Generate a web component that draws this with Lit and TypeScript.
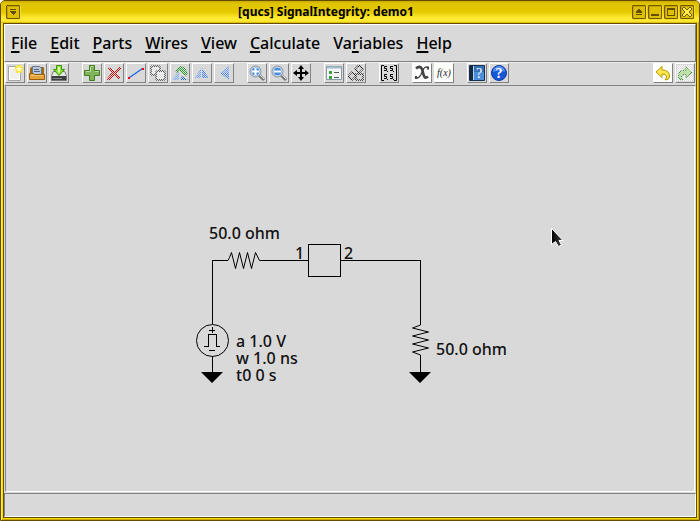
import { LitElement, html, svg, css, nothing, TemplateResult } from "lit";
import { customElement, property } from "lit/decorators.js";

interface Tool {
  name: string;
  icon: TemplateResult;
  stippled?: boolean;
  white?: boolean;
}

const magnifier = (vertical: boolean) => svg`
  <path d="M10 10l5 5" stroke="#777" stroke-width="3"/>
  <path d="M11 10l4 4" stroke="#ddd" stroke-width="1"/>
  <circle cx="6.500" cy="6.500" r="5.500" fill="#a9cdf3" stroke="#8a8f94"/>
  <circle cx="6.500" cy="6.500" r="4.300" fill="#4c8cd8" stroke="#d7e9fb" stroke-width=".8"/>
  <path d="M3 6.500h7" stroke="#fff" stroke-width="2"/>
  ${vertical ? svg`<path d="M6.500 3v7" stroke="#fff" stroke-width="2"/>` : nothing}`;

const newFile: Tool = { name: "New", icon: svg`
  <path d="M1.500 1.500h12v14h-12z" fill="#f0f0ee" stroke="#a2a39d"/>
  <path d="M2.500 2.500h10v12h-10z" fill="none" stroke="#fff"/>
  <circle cx="12" cy="4" r="4" fill="#fff04c"/>
  <path d="M12 0l1.200 2.500 2.800.3-2 1.900.6 2.900L12 6.200 9.400 7.600l.6-2.900-2-1.900 2.800-.3z" fill="#fffde0" stroke="#f2d600" stroke-width=".7"/>` };
const openFile: Tool = { name: "Open", icon: svg`
  <path d="M1 4q0-2 2-2h11q1 0 1 1v11H1z" fill="#a56812"/>
  <path d="M3.500 1.500h7l2 2v6h-9z" fill="#b8c8da" stroke="#66788e"/>
  <path d="M5 4.500h5M5 6.500h6" stroke="#52687f"/>
  <path d="M.5 8.500h4l1 1h10v5H.5z" fill="#e3a43c" stroke="#9a5c08"/>
  <path d="M2 10.500h12" stroke="#f3c468"/>` };
const saveFile: Tool = { name: "Save", icon: svg`
  <path d="M2.500 6.500h11l2 4v5H.5v-5z" fill="#e7e8e6" stroke="#777"/>
  <path d="M1 11h14v4H1z" fill="#3c3f41"/><path d="M2 13.500h9" stroke="#85888a"/>
  <path d="M5.500.5h5v4h3l-5.500 6-5.500-6h3z" fill="#8ae234" stroke="#3f9608"/>
  <path d="M7 2v5l1 1 1-1V2z" fill="#dcf8b6"/>` };
const addPart: Tool = { name: "Add part", icon: svg`
  <path d="M5.500.5h5v5h5v5h-5v5h-5v-5h-5v-5h5z" fill="#80b45a" stroke="#3f7d1d"/>
  <path d="M6.500 2v4.500H2M7 1.500h2.500M11 6.500h4" fill="none" stroke="#bada9f"/>` };
const remove: Tool = { name: "Delete", stippled: true, icon: svg`
  <path d="M2 4l2-1 4 4 5-5 2 1-5 5 4 5-2 1-4-4-4 5-3-1 5-6z" fill="#e01010" stroke="#b80000"/>` };
const wire: Tool = { name: "Add wire", icon: svg`
  <path d="M1.500 12.500l13-9" stroke="#1260e8" stroke-width="1.200"/>
  <path d="M0 12h2v2H0zM14 3h2v2h-2z" fill="#f00"/>` };
const duplicate: Tool = { name: "Duplicate", stippled: true, icon: svg`
  <rect x="1" y="1" width="9" height="9" rx="2" fill="#fff" stroke="#666" stroke-width="2"/>
  <rect x="6" y="6" width="9" height="9" rx="2" fill="#fff" stroke="#666" stroke-width="2"/>` };
const rotate: Tool = { name: "Rotate", stippled: true, icon: svg`
  <path d="M4 7Q7-1 12 3l3 4v3h-3L8 5 5 7z" fill="#2ca52c" stroke="#1c8a1c"/>
  <path d="M0 15L7 6v9z" fill="#79a9ff"/><path d="M8 15l2-4 6 4z" fill="#2368d8"/>` };
const flipHorizontal: Tool = { name: "Flip horizontally", stippled: true, icon: svg`
  <path d="M1 13L7 3v10z" fill="#6ea2fa"/><path d="M8 3l7 10H8z" fill="#4b88ee"/>` };
const flipVertical: Tool = { name: "Flip vertically", stippled: true, icon: svg`
  <path d="M13 1v7H4z" fill="#6ea2fa"/><path d="M4 8h9v7z" fill="#4b88ee"/>` };
const zoomIn: Tool = { name: "Zoom in", icon: magnifier(true) };
const zoomOut: Tool = { name: "Zoom out", icon: magnifier(false) };
const pan: Tool = { name: "Pan", icon: svg`
  <path d="M8 0l3 4H9v3h3V5l4 3-4 3V9H9v3h2l-3 4-3-4h2V9H4v2L0 8l4-3v2h3V4H5z"/>` };
const properties: Tool = { name: "Properties", icon: svg`
  <path d="M.5 1.500h15v13H.5z" fill="#f4f6f6" stroke="#889ba6"/><path d="M1 2.500h14" stroke="#a5bccb" stroke-width="2"/>
  <path d="M3 6h3v3H3zM3 11h3v3H3z" fill="#38a338"/><path d="M8 7.500h5M8 12.500h5" stroke="#555"/>` };
const postProcessing: Tool = { name: "Post-processing", stippled: true, icon: svg`
  <path d="M11 0l4 4-4 4-4-4zM4 7l4 4-4 4-4-4zM8 9h7v6H8z" fill="#d0d0d0" stroke="#222" stroke-width="1.500"/>` };
const sParameters: Tool = { name: "S-parameter viewer", icon: svg`
  <path d="M3 .5H.5v15H3M13 .5h2.500v15H13" fill="none" stroke="#000"/>
  <path d="M6 1.500H3.500v2h2v2H3M12 1.500H9.500v2h2v2H9M6 9.500H3.500v2h2v2H3M12 9.500H9.500v2h2v2H9" fill="none" stroke="#000"/>
  <path d="M6 6h1v1H6zM12 6h1v1h-1zM6 14h1v1H6zM12 14h1v1h-1z"/>` };
const variables: Tool = { name: "Variables", white: true, icon: svg`
  <path d="M2 3.500Q6 0 8 4l2 7q1 3 4 .500" fill="none" stroke="#444" stroke-width="2.600"/>
  <path d="M14 3Q11 0 8.500 6L7 9.500Q4 15 1 12" fill="none" stroke="#444" stroke-width="1.400"/>
  <path d="M13 1.500h2v3h-2zM1 11h2v3H1z" fill="#444"/>` };
const equations: Tool = { name: "Equations", white: true, icon: svg`
  <text x="8" y="11" text-anchor="middle" class="glyph-f">f(x)</text>` };
const book: Tool = { name: "Help contents", icon: svg`
  <path d="M.5.5h15v15H.5z" fill="#4d8edb" stroke="#14304e"/><path d="M1 1h3v14H1z" fill="#14283e"/>
  <path d="M4.500 1v14" stroke="#b8d4f0"/><path d="M5 1h10v6H5z" fill="#3370b5"/>
  <text x="10" y="13" text-anchor="middle" class="glyph-q">?</text>` };
const help: Tool = { name: "Help", icon: svg`
  <circle cx="8" cy="8" r="7.500" fill="#1657d7" stroke="#103c9c"/><path d="M2 7a6 6 0 0 1 12 0q-6-3-12 0" fill="#5590f5"/>
  <text x="8" y="13" text-anchor="middle" class="glyph-q strong">?</text>` };
const undo: Tool = { name: "Undo", white: true, icon: svg`
  <path d="M1 7l6-5.500v3.500q8 0 7.500 7-.5 3-4.500 3 2-2 1.500-4-.5-2-4.500-2v3.500z" fill="#ffe94a" stroke="#b89400"/>` };
const redo: Tool = { name: "Redo", stippled: true, white: true, icon: svg`
  <path d="M15 7L9 1.500v3.500q-8 0-7.500 7 .5 3 4.500 3-2-2-1.500-4 .5-2 4.500-2v3.500z" fill="#a5ea80" stroke="#2a8c1c"/>` };

const toolGroups: Tool[][] = [
  [newFile, openFile, saveFile],
  [addPart, remove, wire, duplicate, rotate, flipHorizontal, flipVertical],
  [zoomIn, zoomOut, pan],
  [properties, postProcessing],
  [sParameters],
  [variables, equations],
  [book, help],
];

const menus: [string, string, string][] = [
  ["", "F", "ile"], ["", "E", "dit"], ["", "P", "arts"], ["", "W", "ires"],
  ["", "V", "iew"], ["", "C", "alculate"], ["Va", "r", "iables"], ["", "H", "elp"],
];

@customElement("tool-button")
class ToolButton extends LitElement {
  @property({ attribute: false }) tool!: Tool;

  static styles = css`
    :host { display: block; }
    .tool {
      box-sizing: border-box; display: block; width: 20px; height: 20px;
      margin: 0; padding: 1px; background: #d9d9d9;
      border: 1px solid; border-color: #fff #828282 #828282 #fff;
    }
    .tool.white { background: #fff; }
    svg { display: block; }
    .glyph-f { font: italic 10px "Liberation Serif", serif; fill: #222; }
    .glyph-q { font: 14px "Liberation Serif", serif; fill: #fff; }
    .glyph-q.strong { font-weight: bold; }
  `;

  render() {
    const { name, icon, stippled, white } = this.tool;
    return html`<button class="tool ${white && !stippled ? "white" : ""}" aria-label=${name} title=${name}>
      <svg width="16" height="16" viewBox="0 0 16 16" fill="#000">
        ${white ? svg`<rect width="16" height="16" fill="#fff"/>` : nothing}
        ${icon}
        ${stippled ? svg`
          <defs>
            <pattern id="dots" width="2" height="2" patternUnits="userSpaceOnUse">
              <path d="M0 0h1v1H0zM1 1h1v1H1z" fill="#d9d9d9" shape-rendering="crispEdges"/>
            </pattern>
          </defs>
          <rect width="16" height="16" fill="url(#dots)"/>` : nothing}
      </svg>
    </button>`;
  }
}

@customElement("circuit-diagram")
class CircuitDiagram extends LitElement {
  static styles = css`
    :host { display: block; overflow: hidden; }
    svg { display: block; width: 100%; height: 100%; }
    .line { fill: none; stroke: #000; stroke-width: 1px; }
    .label { font: 500 16px "Noto Sans", sans-serif; fill: #111; }
  `;

  render() {
    return html`<svg role="img" aria-label="Circuit schematic">
      <defs>
        <linearGradient id="pointer" x1="0" y1="0" x2="1" y2="0">
          <stop offset="0" stop-color="#000"/><stop offset="1" stop-color="#444"/>
        </linearGradient>
      </defs>
      <g transform="translate(-6 -87)">
        <g class="line">
          <path shape-rendering="crispEdges" d="M212.500 324V260.500H228M261 260.500H308M308.500 244.500h32v32h-32zM341 260.500H420.500V324M212.500 356V373M420.500 356V373"/>
          <path d="M228 260.500l1.500-3 2-5 4 16 4-16 4 16 4-16 4 16 4-16 4 8 1.500 0"/>
          <path d="M420.500 324v1l-8 3 16 4-16 4 16 4-16 4 16 4-16 4 8 3v2"/>
          <circle cx="212.500" cy="340.500" r="16"/>
          <path shape-rendering="crispEdges" d="M209 330.500h6M212.500 327v6M209 350.500h6M204 346.500h4.500v-12h8v12H220"/>
        </g>
        <path d="M201 372h22l-11 11zM409 372h22l-11 11z"/>
        <g class="label">
          <text x="209" y="239">50.0 ohm</text>
          <text x="295" y="259">1</text>
          <text x="344" y="259">2</text>
          <text x="236" y="347">a 1.0 V</text>
          <text x="236" y="364">w 1.0 ns</text>
          <text x="236" y="381">t0 0 s</text>
          <text x="436" y="355">50.0 ohm</text>
        </g>
        <path d="M551.500 228.500v16l4-3 3 5 3-1.500-2.500-4.500h4z" fill="url(#pointer)" stroke="#fff"/>
      </g>
    </svg>`;
  }
}

@customElement("app-root")
class AppRoot extends LitElement {
  static styles = css`
    :host { display: block; height: 100vh; background: #fff; font-family: "Noto Sans", sans-serif; color: #000; }
    .window {
      box-sizing: border-box; height: 100%; display: flex; flex-direction: column;
      border: 1px solid #644d00; border-radius: 5px 5px 0 0; background: #f6dc00; overflow: hidden;
      box-shadow: inset 1px 0 #ffec40, inset -1px -1px #cba800;
    }
    .titlebar {
      display: flex; align-items: center; gap: 2px; flex: none; height: 22px; padding: 0 5px;
      background: linear-gradient(#c9aa00, #dfc300 10%, #e4ca00 50%, #ffe92e 75%, #ffeb35 92%, #d4b000);
    }
    .title { flex: 1; margin: 0; text-align: center; font-size: 12px; line-height: 20px; font-weight: 700; white-space: nowrap; }
    .control {
      box-sizing: border-box; width: 14px; height: 14px; padding: 0; border: 1px solid #725800;
      border-radius: 1px; background: #dec000; box-shadow: inset 1px 1px #c4a400, 1px 1px #f4dc32;
    }
    .control svg { display: block; }
    .body {
      flex: 1; min-height: 0; margin: 0 2px 2px; display: flex; flex-direction: column;
      border: 1px solid #644d00; background: #d9d9d9;
    }
    .menubar {
      display: flex; gap: 13px; flex: none; height: 38px; box-sizing: border-box; padding: 0 6px;
      border: 1px solid; border-color: #fff #828282 #828282 #fff; align-items: center;
    }
    .menu { padding: 0; border: 0; background: none; color: #000; font: 500 16px/24px "Noto Sans", sans-serif; }
    .key { text-decoration: underline 2px; text-underline-offset: 2px; text-decoration-skip-ink: none; }
    .toolbar {
      display: flex; gap: 13px; flex: none; height: 24px; box-sizing: border-box;
      border: 1px solid; border-color: #ececec #d9d9d9 #828282 #fff;
    }
    .group { display: flex; gap: 2px; }
    .history { margin-left: auto; }
    .canvas { flex: 1; min-height: 0; margin: 0 1px; border: 1px solid; border-color: #d9d9d9 #fff #fff #828282; }
    .status {
      flex: none; height: 24px; box-sizing: border-box; margin-top: 1px;
      border: 1px solid; border-color: #828282 #fff #fff #828282;
    }
  `;

  control(name: string, path: string, stroke = false) {
    return html`<button class="control" aria-label=${name}>
      <svg width="12" height="12" viewBox="0 0 12 12" shape-rendering=${stroke ? "auto" : "crispEdges"}>
        <path d=${path} fill=${stroke ? "#ffec4c" : "#644d00"} stroke=${stroke ? "#725800" : "none"}/>
      </svg>
    </button>`;
  }

  render() {
    return html`<div class="window">
      <header class="titlebar">
        ${this.control("Window menu", "M3 3h6v1H3zM3 5h6v1L6 9 3 6z")}
        <h1 class="title">[qucs] SignalIntegrity: demo1</h1>
        ${this.control("Shade", "M6 2l3 4v1H3V6zM3 8h6v1H3z")}
        ${this.control("Minimize", "M2 8h8v2H2z")}
        ${this.control("Maximize", "M2 2h8v8H2zM3 4v5h6V4z")}
        ${this.control("Close", "M1 3l2-2 3 3 3-3 2 2-3 3 3 3-2 2-3-3-3 3-2-2 3-3z", true)}
      </header>
      <div class="body">
        <nav class="menubar" aria-label="Main menu">
          ${menus.map(([before, key, after]) => html`<button class="menu">${before}<span class="key">${key}</span>${after}</button>`)}
        </nav>
        <div class="toolbar" role="toolbar" aria-label="Tools">
          ${toolGroups.map((group) => html`<div class="group">
            ${group.map((tool) => html`<tool-button .tool=${tool}></tool-button>`)}
          </div>`)}
          <div class="group history">
            <tool-button .tool=${undo}></tool-button>
            <tool-button .tool=${redo}></tool-button>
          </div>
        </div>
        <circuit-diagram class="canvas"></circuit-diagram>
        <footer class="status"></footer>
      </div>
    </div>`;
  }
}
